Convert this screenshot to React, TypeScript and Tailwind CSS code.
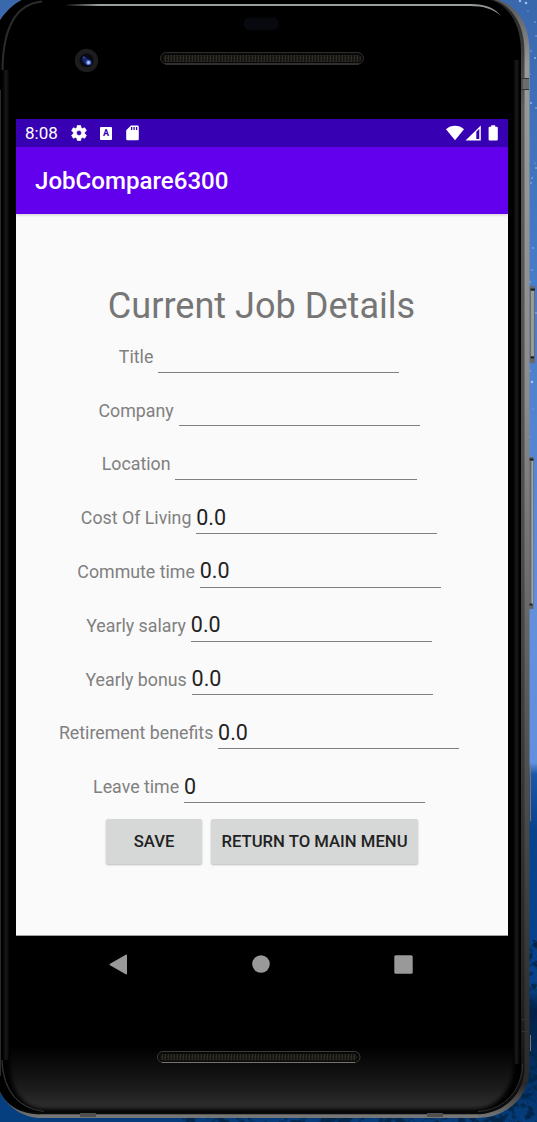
import React from "react";

type Field = { label: string; value: string };

const fields: Field[] = [
  { label: "Title", value: "" },
  { label: "Company", value: "" },
  { label: "Location", value: "" },
  { label: "Cost Of Living", value: "0.0" },
  { label: "Commute time", value: "0.0" },
  { label: "Yearly salary", value: "0.0" },
  { label: "Yearly bonus", value: "0.0" },
  { label: "Retirement benefits", value: "0.0" },
  { label: "Leave time", value: "0" },
];

const stars = [
  [520, 1, 1.2], [526, 3, 1.3], [528, 11, 0.6], [535, 22, 0.7], [531, 51, 0.7], [536, 36, 0.7],
  [535, 58, 0.9], [530, 74, 0.5], [536, 108, 0.8], [531, 103, 0.9], [535, 163, 0.6], [536, 168, 0.8],
  [532, 178, 0.8], [531, 183, 0.8], [533, 248, 0.8], [532, 270, 0.7], [530, 282, 0.8],
  [536, 313, 0.8], [532, 382, 1.3], [530, 371, 0.7], [533, 409, 0.5], [530, 437, 0.5],
];

/* Phone body, side keys and the night-sky desktop behind it */
function Device() {
  return (
    <svg className="absolute inset-0" width="537" height="1122" viewBox="0 0 537 1122" aria-hidden="true">
      <defs>
        <linearGradient id="sky" x1="0" y1="0" x2="0" y2="1">
          <stop offset="0" stopColor="#3a68ad" />
          <stop offset="0.25" stopColor="#477cc8" />
          <stop offset="0.55" stopColor="#638fdb" />
          <stop offset="0.68" stopColor="#6290df" />
          <stop offset="0.69" stopColor="#1c56aa" />
          <stop offset="0.74" stopColor="#07438c" />
          <stop offset="0.88" stopColor="#07438c" />
          <stop offset="0.9" stopColor="#041f45" />
          <stop offset="1" stopColor="#053d7d" />
        </linearGradient>
        <linearGradient id="metal" x1="0" y1="0" x2="0" y2="1">
          <stop offset="0" stopColor="#555" />
          <stop offset="0.06" stopColor="#999" />
          <stop offset="0.35" stopColor="#8c8c8c" />
          <stop offset="0.65" stopColor="#555" />
          <stop offset="0.9" stopColor="#303030" />
          <stop offset="0.97" stopColor="#2a2a2a" />
          <stop offset="1" stopColor="#777" />
        </linearGradient>
        <linearGradient id="metalInner" x1="0" y1="0" x2="0" y2="1">
          <stop offset="0" stopColor="#222" />
          <stop offset="0.1" stopColor="#5c5c5c" />
          <stop offset="0.5" stopColor="#4c4c4c" />
          <stop offset="0.9" stopColor="#222" />
          <stop offset="1" stopColor="#0a0a0a" />
        </linearGradient>
        <linearGradient id="chin" x1="0" y1="0" x2="0" y2="1">
          <stop offset="0" stopColor="#000" />
          <stop offset="0.65" stopColor="#1b1b1b" />
          <stop offset="1" stopColor="#303030" />
        </linearGradient>
        <linearGradient id="glint" gradientUnits="userSpaceOnUse" x1="64" y1="0" x2="501" y2="0">
          <stop offset="0" stopColor="#98a09f" stopOpacity="0" />
          <stop offset="0.08" stopColor="#98a09f" />
          <stop offset="0.93" stopColor="#98a09f" />
          <stop offset="1" stopColor="#aaa" stopOpacity="0.8" />
        </linearGradient>
        <linearGradient id="edge" x1="0" y1="0" x2="1" y2="0">
          <stop offset="0" stopColor="#000" />
          <stop offset="0.5" stopColor="#191919" />
          <stop offset="1" stopColor="#000" />
        </linearGradient>
        <pattern id="mesh" width="3" height="3" patternUnits="userSpaceOnUse">
          <rect width="3" height="3" fill="#15130f" />
          <path d="M.5 0v3M2 1h1" stroke="#2f2c25" strokeWidth="1" />
        </pattern>
        <filter id="soften" x="-0.05" y="-0.3" width="1.100" height="1.600" colorInterpolationFilters="sRGB">
          <feGaussianBlur stdDeviation="2" />
        </filter>
        <filter id="grain" x="0" y="0" width="1" height="1">
          <feTurbulence type="fractalNoise" baseFrequency="0.12" numOctaves="4" seed="8" />
          <feColorMatrix values="0 0 0 0 0  0 0 0 0 0.02  0 0 0 0 0.07  5 0 0 0 -2.3" />
        </filter>
      </defs>
      <rect width="537" height="1122" fill="url(#sky)" />
      <rect x="490" y="940" width="47" height="182" filter="url(#grain)" />
      <rect y="1085" width="40" height="37" fill="#053f80" />
      <rect x="180" y="1108" width="357" height="14" filter="url(#grain)" />
      {stars.map(([x, y, r]) => (
        <circle key={`${x}-${y}`} cx={x} cy={y} r={r} fill="#bcd6ff" opacity="0.8" />
      ))}

      {/* power and volume keys */}
      <path d="M529.500 286h5.500v77h-5.500z" fill="#686868" />
      <path d="M531 291h3v65h-3z" fill="#9a9a96" />
      <path d="M530.500 289.500h4.500M530.500 357.500h3.500" stroke="#202020" strokeWidth="2" />
      <path d="M529 457h4.500v152H529z" fill="#666" />
      <path d="M531.500 461h1.500v143h-1.500z" fill="#a8a8a4" />
      <path d="M529 459.500h4.500M529 604.500h3.500" stroke="#202020" strokeWidth="2" />
      <path d="M530.500 765v56M530.500 1035v16" stroke="#77756b" />

      <path d="M26-2H488C513 0 529.500 20 529.500 52V1068C529.500 1096 508 1118 476 1118H42C22 1118 6 1106-1 1090V22C5 12 14 3 26-2Z" fill="url(#metal)" />
      <path d="M26-2H484C508 0 524.500 20 524.500 52V1068C524.500 1093 505 1114.500 474 1114.500H42C18 1114.500 4 1104-1 1088V22C5 12 14 3 26-2Z" fill="url(#metalInner)" />
      <path d="M26-2H481C505 0 521 20 521 52V1068C521 1090 503 1112.500 474 1112.500H42C18 1112.500 4 1104-1 1088V22C5 12 14 3 26-2Z" fill="#000" />
      <path d="M10 1046H514V1062C514 1087 499 1109 474 1109H44C23 1109 10 1089 10 1066Z" fill="url(#chin)" filter="url(#soften)" />
      <path d="M513 60h7v1004h-7z" fill="url(#edge)" />
      <path d="M2.500 70h7v990h-7z" fill="url(#edge)" />
      <path d="M.5 90V1076" stroke="#2c2c2c" />
      <path d="M2.500 70C3 28 16 4 42 1.500" fill="none" stroke="#2c2c2c" strokeWidth="2" />
      <path d="M2 1060C3 1092 20 1109 44 1111.500" fill="none" stroke="#303030" strokeWidth="1.200" />
      <path d="M522.500 1064C522.500 1088 506 1110 478 1111.500" fill="none" stroke="#303030" />
      <path d="M66 4V6H470C484 6 493 9 501 16C495 8 486 4 470 4Z" fill="url(#glint)" />
      <path d="M521.500 78.500H529M521.500 89.500H529M521.500 1019.500H529M521.500 1031.500H529" stroke="#333" />
      <path d="M523 79h6v10h-6z" fill="#6b6b6b" />
      <path d="M40 1115.500H478" stroke="#777" strokeWidth="2" />
      <path d="M80 1113h16v4H80zM427 1113h16v4h-16z" fill="#505050" />

      {/* sensor, camera, speakers */}
      <rect x="243.500" y="17.500" width="35.500" height="12.500" rx="6.250" fill="#08090e" />
      <circle cx="86.500" cy="60.500" r="11.700" fill="#1d1d1e" />
      <circle cx="86.500" cy="60.500" r="7" fill="#090a13" />
      <path d="M83 56l3 1 3 3-1 5-4-2-2-3z" fill="#17256b" />
      <circle cx="88.500" cy="62.500" r="2.800" fill="#4162cf" />
      <circle cx="88.500" cy="62.500" r="1.500" fill="#b3c7ff" />
      <circle cx="84" cy="57.500" r="1" fill="#344a9e" />
      <rect x="160.500" y="52.500" width="203" height="11.500" rx="5.700" fill="#090909" stroke="#2f2e2d" />
      <rect x="163" y="55" width="198" height="7" rx="3.500" fill="url(#mesh)" />
      <path d="M165 64H359" stroke="#4a4845" />
      <rect x="157.500" y="1051.500" width="202.500" height="11" rx="5.500" fill="#090909" stroke="#3c3b3a" />
      <rect x="160" y="1054" width="197" height="6.500" rx="3.200" fill="url(#mesh)" />
      <path d="M162 1062.500H355" stroke="#77736d" />
    </svg>
  );
}

function StatusBar() {
  return (
    <div className="flex h-[28px] shrink-0 items-center bg-[#3700b3] pl-[9px] pr-[9px] text-white">
      <span className="w-[46px] text-[17px] leading-[28px]">8:08</span>
      <svg className="shrink-0" width="16" height="16" viewBox="2 2 20 20" fill="white">
        <path fillRule="evenodd" stroke="white" strokeWidth="0.500" d="M19.140 12.940c.04-.3.06-.61.06-.94s-.02-.64-.07-.94l2.030-1.580a.49.49 0 0 0 .12-.61l-1.920-3.320a.488.488 0 0 0-.59-.22l-2.390.96c-.5-.38-1.030-.7-1.620-.94l-.36-2.540a.484.484 0 0 0-.48-.41h-3.840c-.24 0-.43.17-.47.41l-.36 2.540c-.59.24-1.130.57-1.620.94l-2.390-.96c-.22-.08-.47 0-.59.22L2.740 8.870c-.12.21-.08.47.12.61l2.030 1.580c-.05.3-.09.63-.09.94s.02.64.07.94l-2.030 1.580a.49.49 0 0 0-.12.61l1.920 3.320c.12.22.37.29.59.22l2.390-.96c.5.38 1.030.7 1.620.94l.36 2.540c.05.24.24.41.48.41h3.840c.24 0 .44-.17.47-.41l.36-2.540c.59-.24 1.130-.56 1.620-.94l2.390.96c.22.08.47 0 .59-.22l1.920-3.320a.49.49 0 0 0-.12-.61zM12 15.100A3.100 3.100 0 1 1 12 8.900a3.100 3.100 0 0 1 0 6.200z" />
      </svg>
      <span className="ml-[13px] flex h-[13px] w-[12px] items-center justify-center rounded-[1px] bg-white text-[9px] font-bold leading-none text-[#3700b3]">
        A
      </span>
      <svg className="ml-[14px] shrink-0" width="13" height="16" viewBox="0 0 13 16">
        <path d="M5 .5h6.500A1.300 1.300 0 0 1 12.800 1.800V14a1.300 1.300 0 0 1-1.300 1.300h-10A1.300 1.300 0 0 1 .2 14V5.300Z" fill="white" />
        <path d="M5.600 2v3M8.100 2v3M10.600 2v3" stroke="#3700b3" strokeWidth="1.300" />
      </svg>
      <svg className="-mt-[1px] ml-auto shrink-0" width="53" height="16" viewBox="0 0 53 16" fill="white">
        <path d="M0 4.200C5-.4 13-.4 18 4.200L9 15.200Z" />
        <path fillRule="evenodd" d="M19.500 15.500L34.800.5v15ZM30.300 6.700V14h3V3.800Z" />
        <path d="M45.200 .3h4v1.500h1.600a1 1 0 0 1 1 1V14.500a1 1 0 0 1-1 1h-7.200a1 1 0 0 1-1-1V2.800a1 1 0 0 1 1-1h1.600Z" />
      </svg>
    </div>
  );
}

function FieldRow({ label, value }: Field) {
  return (
    <div className="flex h-[53.800px] items-start justify-center">
      <span className="whitespace-nowrap pt-[12.200px] text-[17.800px] leading-[22px] text-[#808080]">{label}</span>
      <div className="mx-[4.800px] h-[39px] w-[241.200px] border-b border-[#808080] pt-[9.500px] text-[21.500px] leading-[26px] text-[#222]">
        {value}
      </div>
    </div>
  );
}

export default function App() {
  return (
    <div className="relative h-[1122px] w-[537px] overflow-hidden bg-black font-['Roboto',sans-serif]">
      <Device />
      <main className="relative ml-[16px] flex w-[492px] flex-col pt-[119px]">
        <StatusBar />
        <header className="relative z-10 flex h-[66.500px] items-center bg-[#6200ee] pl-[19px] pt-[2px] text-[24.100px] font-medium text-white shadow-[0_1px_3px_rgba(0,0,0,0.18)]">
          JobCompare6300
        </header>
        <section className="flex h-[722px] flex-col border-b border-[#9a9fa0] bg-[#fafafa] pr-[1px] pt-[70px]">
          <h1 className="text-center text-[36.100px] leading-[44px] text-[#767676]">Current Job Details</h1>
          <div className="pt-[6.200px]">
            {fields.map((field) => (
              <FieldRow key={field.label} {...field} />
            ))}
          </div>
          <div className="flex justify-center gap-[9px] pl-[1px] pt-[1px]">
            <button className="h-[45px] w-[96px] rounded-[2px] bg-[#d6d8d7] text-[16.700px] font-medium text-[#222] shadow-[0_1px_2px_rgba(0,0,0,0.25)]">
              SAVE
            </button>
            <button className="h-[45px] w-[207px] whitespace-nowrap rounded-[2px] bg-[#d6d8d7] text-[16.700px] font-medium text-[#222] shadow-[0_1px_2px_rgba(0,0,0,0.25)]">
              RETURN TO MAIN MENU
            </button>
          </div>
        </section>
        <nav className="flex h-[57px] items-center justify-between pl-[93px] pr-[95px]">
          <svg width="19" height="21" viewBox="0 0 19 21">
            <path d="M1 9.700Q0 10.500 1 11.300L16.700 20.300Q18 20.700 18 19.500V1.500Q18 .3 16.700.7Z" fill="#999" />
          </svg>
          <svg width="18" height="18" viewBox="0 0 18 18">
            <circle cx="9" cy="9" r="8.800" fill="#999" />
          </svg>
          <svg width="19" height="19" viewBox="0 0 19 19">
            <rect x=".3" y=".3" width="18.400" height="18.400" rx="1.500" fill="#999" />
          </svg>
        </nav>
      </main>
    </div>
  );
}
